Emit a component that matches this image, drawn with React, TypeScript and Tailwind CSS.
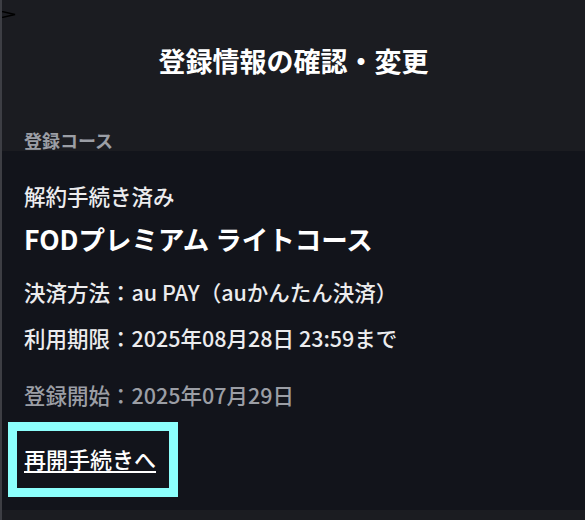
import React from "react";

const font = { fontFamily: '"Noto Sans CJK JP", "Noto Sans", sans-serif' };

export default function App() {
  return (
    <div
      style={font}
      className="relative flex h-[520px] w-[585px] flex-col border-l-2 border-[#3d3e44] bg-[#1b1c21] text-[#ececee]"
    >
      {/* stray chevron at the very top-left */}
      <svg className="absolute left-0 top-[11px]" width="14" height="7" viewBox="0 0 14 7" fill="none">
        <path d="M0 0.5 L13 3.5 L0 6.5" stroke="#000" strokeWidth="1.5" />
      </svg>

      <header className="flex h-[151px] flex-col pt-[47px]">
        <h1 className="text-center text-[27px] font-bold leading-none text-white">
          登録情報の確認・変更
        </h1>
        <p className="mt-[57px] pl-[22px] text-[18px] font-bold leading-none text-[#9b9ea5]">
          登録コース
        </p>
      </header>

      <section className="flex flex-col bg-[#12141b] pl-[22px] pt-[34px] pb-[37px] font-medium">
        <p className="text-[21.5px] leading-none">解約手続き済み</p>
        <p className="mt-[19px] text-[26.5px] font-bold leading-none text-white">
          FODプレミアム ライトコース
        </p>
        <p className="mt-[29px] text-[21.5px] leading-none">決済方法：au PAY（auかんたん決済）</p>
        <p className="mt-[24px] text-[21.5px] leading-none">利用期限：2025年08月28日 23:59まで</p>
        <p className="mt-[36px] text-[21.5px] leading-none text-[#9b9ea5]">登録開始：2025年07月29日</p>
        <div className="relative mt-[41px] self-start">
          <a href="#" className="text-[22px] leading-none text-white underline underline-offset-[3px]">
            再開手続きへ
          </a>
          <div className="pointer-events-none absolute left-[-16px] top-[-25px] h-[75px] w-[170px] border-[9px] border-[#8cfffc]" />
        </div>
      </section>

      <div className="flex-1" />
    </div>
  );
}
